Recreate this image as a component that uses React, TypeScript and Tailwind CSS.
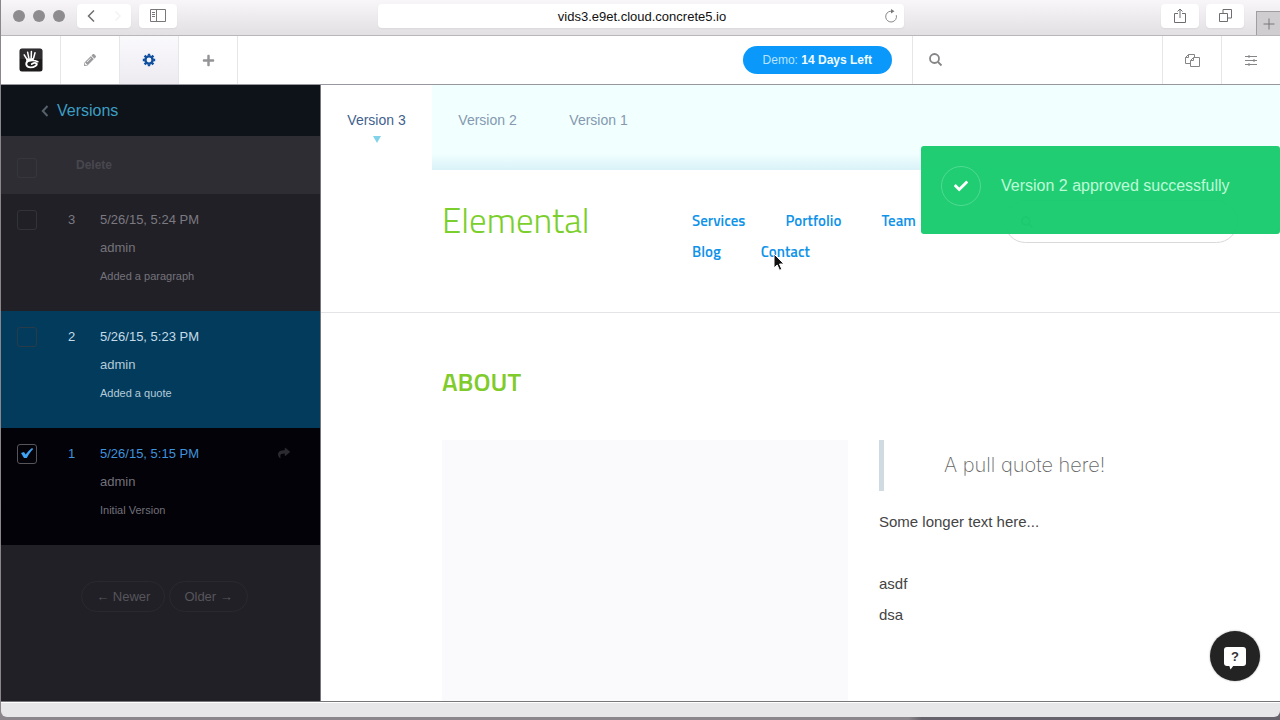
import { FaCheck, FaPencilAlt, FaPlus, FaSearch, FaShare } from 'react-icons/fa';

type Version = {
  id: number;
  date: string;
  author: string;
  comment: string;
  checked: boolean;
  row: string;
  title: string;
  text: string;
};

const versions: Version[] = [
  {
    id: 3,
    date: '5/26/15, 5:24 PM',
    author: 'admin',
    comment: 'Added a paragraph',
    checked: false,
    row: 'bg-[#212027]',
    title: 'text-[#7b7a81]',
    text: 'text-[#74737a]',
  },
  {
    id: 2,
    date: '5/26/15, 5:23 PM',
    author: 'admin',
    comment: 'Added a quote',
    checked: false,
    row: 'bg-[#033b5d]',
    title: 'text-[#c3dbe8]',
    text: 'text-[#b4cbd8]',
  },
  {
    id: 1,
    date: '5/26/15, 5:15 PM',
    author: 'admin',
    comment: 'Initial Version',
    checked: true,
    row: 'bg-[#020208]',
    title: 'text-[#3f93dc]',
    text: 'text-[#72717a]',
  },
];

const navItems = ['Services', 'Portfolio', 'Team', 'Blog', 'Contact'];

const CheckBox = ({ label, checked }: { label: string; checked: boolean }) => (
  <span className="grid h-5 w-5">
    <input
      type="checkbox"
      aria-label={label}
      defaultChecked={checked}
      className="peer col-start-1 row-start-1 h-5 w-5 appearance-none rounded-[3px] border border-[#3b3a41]/70 checked:border-[#55555b]"
    />
    <svg
      viewBox="0 0 20 20"
      className="pointer-events-none invisible col-start-1 row-start-1 h-5 w-5 peer-checked:visible"
    >
      <path d="M4 9 7 8l1.700 2.400C10.500 8 12.500 5.800 15 4l1.200 1C13.500 7.600 11.600 10.600 9.800 14H7Z" fill="#3fa2f2" />
    </svg>
  </span>
);

const BrowserBar = () => (
  <header className="flex h-9 items-center border-b border-[#b9b7ba] bg-linear-to-b from-[#f8f6f9] to-[#e2e0e3] pl-3">
    <div className="mb-[3px] flex gap-2">
      <span className="h-3 w-3 rounded-full bg-[#8e8c8f]" />
      <span className="h-3 w-3 rounded-full bg-[#8e8c8f]" />
      <span className="h-3 w-3 rounded-full bg-[#8e8c8f]" />
    </div>
    <div className="mb-1 ml-3 flex h-6 w-[54px] rounded bg-white shadow-xs">
      <button type="button" aria-label="Back" className="grid w-1/2 place-items-center">
        <svg viewBox="0 0 12 14" className="h-[14px] w-3" fill="none" stroke="#6f6d70" strokeWidth="1.5">
          <path d="M9 1.5 3.5 7 9 12.5" />
        </svg>
      </button>
      <button type="button" aria-label="Forward" className="grid w-1/2 place-items-center">
        <svg viewBox="0 0 12 14" className="h-[14px] w-3" fill="none" stroke="#f4f3f5" strokeWidth="1.5">
          <path d="M3.5 2.5 8 7 3.5 11.5" />
        </svg>
      </button>
    </div>
    <button
      type="button"
      aria-label="Show sidebar"
      className="mb-1 ml-2 grid h-6 w-[38px] place-items-center rounded bg-white shadow-xs"
    >
      <svg viewBox="0 0 16 13" className="h-[13px] w-4" fill="none" stroke="#79777a">
        <path d="M.5.5h15v12H.5zM6.5.5v12M2 3.5h3M2 5.5h3M2 7.5h3" />
      </svg>
    </button>
    <div className="flex-1" />
    <div className="mb-1 flex h-6 w-[526px] items-center rounded bg-white pr-[6px] shadow-xs">
      <input
        aria-label="Address"
        defaultValue="vids3.e9et.cloud.concrete5.io"
        className="min-w-0 flex-1 pt-1 pb-[2px] pl-[22px] text-center text-[13px] leading-4 text-[#111]"
      />
      <button type="button" aria-label="Reload">
        <svg viewBox="0 0 14 14" className="h-[14px] w-[14px]" fill="none" stroke="#8a888b">
          <path d="M12.3 6.2A5.4 5.4 0 1 1 7 2.2h1.5" />
          <path d="M7 0v4.5L10.5 2.3z" fill="#79777a" stroke="none" />
        </svg>
      </button>
    </div>
    <div className="w-[257px] flex-none" />
    <button
      type="button"
      aria-label="Share"
      className="mb-1 grid h-6 w-[38px] place-items-center rounded bg-white shadow-xs"
    >
      <svg viewBox="0 0 12 15" className="h-[15px] w-3" fill="none" stroke="#6f6d70">
        <path d="M4 5.5H.5v9h11v-9H8M6 10V1M3.5 3.5 6 1l2.5 2.5" />
      </svg>
    </button>
    <button
      type="button"
      aria-label="Show all tabs"
      className="mb-1 ml-[7px] grid h-6 w-[38px] place-items-center rounded bg-white shadow-xs"
    >
      <svg viewBox="0 0 13 13" className="h-[13px] w-[13px]" fill="none" stroke="#6f6d70">
        <path d="M.5 4.5h8v8h-8zM4 4.5v-4h8.5V9h-4" />
      </svg>
    </button>
    <button
      type="button"
      aria-label="New tab"
      className="ml-3 grid h-6 w-6 place-items-center self-end border-t border-l border-[#a09ea1] bg-[#cfcdd0]"
    >
      <svg viewBox="0 0 12 12" className="h-3 w-3" stroke="#78767a">
        <path d="M6 .5v11M.5 6h11" />
      </svg>
    </button>
  </header>
);

const Logo = () => (
  <svg viewBox="0 0 24 24" className="h-6 w-6">
    <rect x=".5" y=".5" width="23" height="23" rx="2.5" fill="#1d1b1c" />
    <path d="M1 1h22v10H1z" fill="#3d3b3d" opacity=".6" />
    <g fill="none" stroke="#fff" strokeLinecap="round">
      <path d="M5.2 6.8 7.8 11M8.600 4.200 9.800 10M12.400 3.600 12.200 10M16 4.800 14.600 10" strokeWidth="1.5" />
      <path d="M18.800 13.700C16 12.300 12.500 12.200 9 13" strokeWidth="1.7" />
      <path d="M9 13C6 15.200 7 19.300 11.500 19.400 15.500 19.400 18.600 17 17.600 15.600 16.800 14.700 14.500 15 12.800 16" strokeWidth="1.9" />
    </g>
    <path d="M7 10.5 14.800 10v2.500L7.500 14z" fill="#fff" />
  </svg>
);

const Gear = () => (
  <svg viewBox="0 0 14 14" className="h-[14px] w-[14px]" fill="none" stroke="#0e4f9e">
    <circle cx="7" cy="7" r="3.6" strokeWidth="2.4" />
    <path d="M7 .8v2M7 11.2v2M.8 7h2M11.2 7h2M2.6 2.6 4 4M10 10l1.4 1.4M2.6 11.4 4 10M10 4l1.4-1.4" strokeWidth="2.4" />
  </svg>
);

const Toolbar = () => (
  <div className="flex h-[49px] border-b border-[#98969f] bg-white text-[#8c8b8e]">
    <a href="#dashboard" aria-label="concrete5" className="grid w-[60px] place-items-center border-r border-[#e6e5e8]">
      <Logo />
    </a>
    <button type="button" aria-label="Edit" className="grid w-[59px] place-items-center border-r border-[#e6e5e8]">
      <FaPencilAlt size={12} color="#9b9a9d" />
    </button>
    <button
      type="button"
      aria-label="Settings"
      className="grid w-[59px] place-items-center border-r border-[#e6e5e8] bg-linear-to-b from-[#faf9fc] to-[#edebf0]"
    >
      <Gear />
    </button>
    <button type="button" aria-label="Add" className="grid w-[59px] place-items-center border-r border-[#e6e5e8]">
      <FaPlus size={13} color="#949396" />
    </button>
    <div className="flex flex-1 items-center justify-end pr-5">
      <button type="button" className="h-7 rounded-full bg-[#0a99fb] px-5 text-xs text-[#b9e3ff]">
        Demo: <b className="text-[#f0faff]">14 Days Left</b>
      </button>
    </div>
    <label className="flex w-[250px] items-center gap-2 border-l border-[#e6e5e8] pl-4">
      <svg viewBox="0 0 14 14" className="h-[14px] w-[14px]" fill="none" stroke="#858487" strokeWidth="1.8">
        <circle cx="5.5" cy="5.5" r="4.5" />
        <path d="M9 9l3.5 3.5" />
      </svg>
      <input type="search" aria-label="Search" className="min-w-0 flex-1" />
    </label>
    <button type="button" aria-label="Pages" className="grid w-[59px] place-items-center border-l border-[#e6e5e8]">
      <svg viewBox="0 0 15 15" className="h-[15px] w-[15px]" fill="none" stroke="#858487">
        <path d="M5.5 10.5h-5v-6l3-3h6v3M.5 4.5h3v-3M5.5 7.5l3-3h6v9h-9zM5.5 7.5h3v-3" />
      </svg>
    </button>
    <button type="button" aria-label="Page settings" className="grid w-[59px] place-items-center border-l border-[#e6e5e8]">
      <svg viewBox="0 0 12 13" className="h-[13px] w-3" stroke="#858487" fill="#858487">
        <path d="M0 2.5h12M0 6.5h12M0 10.5h12" />
        <path d="M3 2h2v1H3zM8 6h2v1H8zM3 10h2v1H3z" />
      </svg>
    </button>
  </div>
);

const VersionsPanel = () => (
  <aside className="w-80 flex-none border-r border-[#77767c] bg-[#212026]">
    <h2 className="h-[51px] bg-[#0d1318] pt-3 pl-10 text-base leading-7 text-[#3d9ec4]">
      <a href="#settings" className="flex items-center gap-2">
        <svg viewBox="0 0 8 12" className="h-3 w-2" fill="none" stroke="#55606a" strokeWidth="2">
          <path d="M6.5 1 1.8 6l4.7 5" />
        </svg>
        Versions
      </a>
    </h2>
    <table className="w-full table-fixed text-left text-[13px] leading-7">
      <colgroup>
        <col className="w-[59px]" />
        <col className="w-10" />
        <col />
        <col className="w-[42px]" />
      </colgroup>
      <thead>
        <tr className="h-[58px] bg-[#2e2d34]">
          <th className="pt-[22px] pl-4 align-top">
            <CheckBox label="Select all versions" checked={false} />
          </th>
          <th colSpan={3} className="pl-4">
            <button type="button" className="text-xs font-bold text-[#48474e]">
              Delete
            </button>
          </th>
        </tr>
      </thead>
      <tbody>
        {versions.map((v) => (
          <tr key={v.id} className={`h-[117px] align-top ${v.row}`}>
            <td className="pt-4 pl-4">
              <CheckBox label={`Version ${v.id}`} checked={v.checked} />
            </td>
            <td className={`pt-3 pl-2 ${v.title}`}>{v.id}</td>
            <td className={`pt-3 ${v.text}`}>
              <p className={v.title}>{v.date}</p>
              <p>{v.author}</p>
              <p className="text-[11px] leading-7">{v.comment}</p>
            </td>
            <td className="pt-[19px]">
              {v.checked && (
                <button type="button" aria-label="Version actions" className="block">
                  <FaShare size={12} color="#2b2a31" />
                </button>
              )}
            </td>
          </tr>
        ))}
      </tbody>
    </table>
    <div className="flex justify-center gap-1 py-9 pl-2 text-[13px] text-[#56555b]">
      <button type="button" className="h-[31px] rounded-full border border-[#2a2930] px-[14px]">
        ← Newer
      </button>
      <button type="button" className="h-[31px] rounded-full border border-[#2a2930] px-[14px]">
        Older →
      </button>
    </div>
  </aside>
);

const VersionTabs = () => (
  <nav className="flex h-[85px] bg-linear-to-b from-[#f2ffff] from-80% to-[#d9f2f8] text-sm leading-7 text-[#8499af]">
    <a href="#version-3" className="flex w-[111px] flex-col items-center bg-white pt-[21px] text-[#3f5f8d]">
      Version 3
      <svg viewBox="0 0 8 7" className="mt-[2px] h-[7px] w-2" fill="#82d3ea">
        <path d="M0 0h8L4 7z" />
      </svg>
    </a>
    <a href="#version-2" className="w-[111px] pt-[21px] text-center">
      Version 2
    </a>
    <a href="#version-1" className="w-[111px] pt-[21px] text-center">
      Version 1
    </a>
  </nav>
);

const Toast = () => (
  <div
    role="status"
    className="absolute top-[61px] right-0 flex h-[88px] w-[359px] items-center rounded-[3px] bg-[#15ca6c]/95 pb-2 pl-5 text-base text-[#bdfad8]"
  >
    <span className="mr-5 grid h-10 w-10 place-items-center rounded-full border border-[#4fdb92]">
      <FaCheck size={14} color="#fff" />
    </span>
    Version 2 approved successfully
  </div>
);

const Preview = () => (
  <main className="relative flex min-w-0 flex-1 flex-col bg-white">
    <VersionTabs />
    <div className="flex h-[143px] border-b border-[#e4e4e6] pr-[42px] pl-[121px] font-['Titillium_Web','Roboto',sans-serif]">
      <h1 className="w-[250px] flex-none pt-[30px] text-[35px] leading-10 font-light text-[#7bcf2c]">Elemental</h1>
      <nav className="relative flex flex-1 flex-wrap content-start gap-x-10 pt-[35px] pr-12 text-[15px] leading-[31px] font-semibold text-[#0f93e8]">
        {navItems.map((item) => (
          <a key={item} href={`#${item.toLowerCase()}`}>
            {item}
          </a>
        ))}
        {/* mouse pointer */}
        <svg viewBox="0 0 12 19" className="absolute top-[83px] left-[81px] h-[19px] w-3">
          <path d="M1 1v14l3.2-3 2.3 5.3 2.3-1L6.5 11H11z" fill="#111" stroke="#fff" />
        </svg>
      </nav>
      <label className="mt-[30px] flex h-[43px] w-[234px] flex-none items-center rounded-full border border-[#d9d9dc] pr-4 pl-4">
        <FaSearch size={12} color="#b5b5b8" />
        <input type="search" aria-label="Search site" className="min-w-0 flex-1" />
      </label>
    </div>
    <section className="flex flex-1 flex-col pt-[51px] pl-[121px]">
      <h2 className="font-['Titillium_Web','Roboto',sans-serif] text-[26px] leading-9 font-semibold text-[#7fcb2b]">ABOUT</h2>
      <div className="mt-10 grid flex-1 grid-cols-[1fr_401px] gap-[31px]">
        <div className="bg-[#fafafc]" />
        <div className="text-[15px] leading-[31px] text-[#444]">
          <blockquote className="mb-[15px] border-l-[5px] border-[#cfdbe0] py-[10px] pl-[60px] font-['Inter',sans-serif] text-xl leading-[31px] font-extralight text-[#666]">
            A pull quote here!
          </blockquote>
          <p className="mb-[31px]">Some longer text here...</p>
          <p>asdf</p>
          <p>dsa</p>
        </div>
      </div>
    </section>
    <Toast />
    <button
      type="button"
      aria-label="Help"
      className="absolute right-5 bottom-5 grid h-[50px] w-[50px] place-items-center rounded-full bg-[#222322] shadow-[0_0_2px_rgba(0,0,0,0.4)]"
    >
      <span className="relative grid h-[19px] w-[22px] place-items-center rounded-[3px] bg-white text-[13px] leading-none font-bold text-[#333]">
        ?
        <svg viewBox="0 0 6 5" className="absolute top-[18px] left-1 h-[5px] w-[6px]" fill="#fff">
          <path d="M1 0h5L2.5 4.5z" />
        </svg>
      </span>
    </button>
  </main>
);

const App = () => {
  return (
    <div className="flex min-h-screen flex-col bg-linear-to-r from-[#8b868b] from-71% to-[#66636d] to-72% pb-[3px] pl-px font-['Liberation_Sans',Arial,sans-serif]">
      <div className="flex flex-1 flex-col overflow-hidden rounded-b-md bg-[#e7e6e9]">
        <BrowserBar />
        <Toolbar />
        <div className="flex flex-1">
          <VersionsPanel />
          <Preview />
        </div>
        <footer className="h-4 border-t border-[#77757a]">
          <div className="h-px bg-white" />
        </footer>
      </div>
    </div>
  );
};

export default App;
